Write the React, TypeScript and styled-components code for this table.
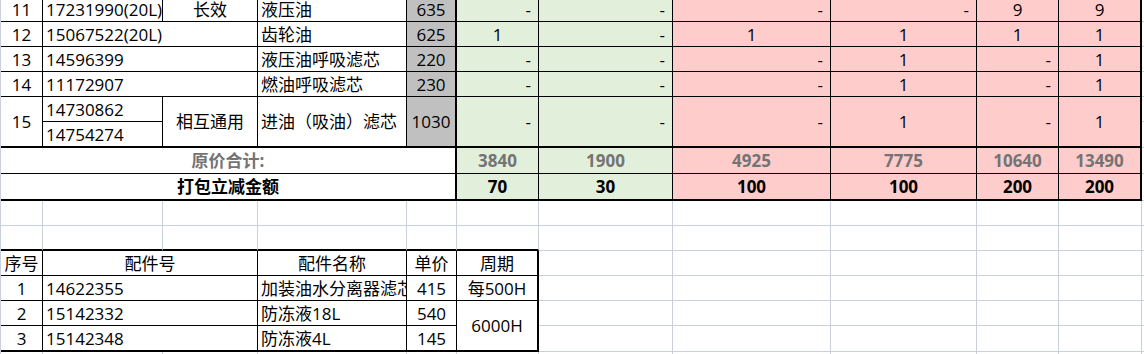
import React from "react";
import styled, { createGlobalStyle } from "styled-components";

type Edge = "grid" | "thin" | "thick";
type Align = "left" | "center" | "right";
type Fill = "none" | "gray" | "green" | "pink";

const GlobalStyle = createGlobalStyle`
  html, body {
    margin: 0;
    padding: 0;
    background: #ffffff;
    overflow: hidden;
  }
`;

const fills: Record<Fill, string> = {
  none: "#ffffff",
  gray: "#c0c0c0",
  green: "#e2efda",
  pink: "#ffcccc",
};

const edge = (e: Edge) =>
  e === "thick"
    ? "2px solid #000000"
    : e === "thin"
    ? "1px solid #000000"
    : "1px solid #c9cfdb";

const COLS = [42, 120, 95, 149, 50, 82, 134, 158, 146, 82, 83, 40];
const ROWS = [25, 25, 25, 25, 25, 26, 26, 27, 25, 25, 25, 25, 25, 26, 25];

const Sheet = styled.div`
  display: grid;
  grid-template-columns: ${COLS.map((w) => `${w}px`).join(" ")};
  grid-template-rows: ${ROWS.map((h) => `${h}px`).join(" ")};
  margin-top: -3px;
  border-left: 1px solid #c9cfdb;
  font-family: "Open Sans", "Noto Sans CJK SC", sans-serif;
  font-size: 17px;
  color: #000000;
`;

const Cell = styled.div<{
  $c: number;
  $r: number;
  $cs: number;
  $rs: number;
  $align: Align;
  $fill: Fill;
  $right: Edge;
  $bottom: Edge;
  $bold: boolean;
  $muted: boolean;
}>`
  grid-column: ${(p) => p.$c} / span ${(p) => p.$cs};
  grid-row: ${(p) => p.$r} / span ${(p) => p.$rs};
  box-sizing: border-box;
  display: flex;
  align-items: center;
  justify-content: ${(p) =>
    p.$align === "left" ? "flex-start" : p.$align === "right" ? "flex-end" : "center"};
  padding: ${(p) => (p.$align === "left" ? "0 0 0 3px" : p.$align === "right" ? "0 7px 0 0" : "0")};
  overflow: hidden;
  white-space: nowrap;
  line-height: 1;
  background: ${(p) => fills[p.$fill]};
  border-right: ${(p) => edge(p.$right)};
  border-bottom: ${(p) => edge(p.$bottom)};
  font-weight: ${(p) => (p.$bold ? 700 : 400)};
  color: ${(p) => (p.$muted ? "#747474" : "#000000")};
`;

type Spec = {
  c: number;
  r: number;
  cs?: number;
  rs?: number;
  t?: string;
  a?: Align;
  fill?: Fill;
  right?: Edge;
  bottom?: Edge;
  bold?: boolean;
  muted?: boolean;
};

const qtyFills: Fill[] = ["green", "green", "pink", "pink", "pink", "pink"];

const items = [
  { no: "11", part: "17231990(20L)", note: "长效", name: "液压油", price: "635", qty: ["-", "-", "-", "-", "9", "9"] },
  { no: "12", part: "15067522(20L)", name: "齿轮油", price: "625", qty: ["1", "-", "1", "1", "1", "1"] },
  { no: "13", part: "14596399", name: "液压油呼吸滤芯", price: "220", qty: ["-", "-", "-", "1", "-", "1"] },
  { no: "14", part: "11172907", name: "燃油呼吸滤芯", price: "230", qty: ["-", "-", "-", "1", "-", "1"] },
];

const totals = ["3840", "1900", "4925", "7775", "10640", "13490"];
const discounts = ["70", "30", "100", "100", "200", "200"];

const spares = [
  { no: "1", part: "14622355", name: "加装油水分离器滤芯", price: "415" },
  { no: "2", part: "15142332", name: "防冻液18L", price: "540" },
  { no: "3", part: "15142348", name: "防冻液4L", price: "145" },
];

const qtyCells = (r: number, values: string[], extra: Partial<Spec> = {}): Spec[] =>
  values.map((v, i) => ({
    c: 6 + i,
    r,
    t: v,
    a: v === "-" ? "right" : "center",
    fill: qtyFills[i],
    right: i === 5 ? "thick" : "thin",
    bottom: "thin",
    ...extra,
  }));

const blank = (r: number, from: number, to: number, bottom: Edge = "grid"): Spec[] => {
  const out: Spec[] = [];
  for (let c = from; c <= to; c++) out.push({ c, r, bottom });
  return out;
};

const buildCells = (): Spec[] => {
  const s: Spec[] = [];
  const thin = { right: "thin" as Edge, bottom: "thin" as Edge };

  items.forEach((it, i) => {
    const r = i + 1;
    s.push({ c: 1, r, t: it.no, ...thin });
    if (it.note) {
      s.push({ c: 2, r, t: it.part, a: "left", ...thin });
      s.push({ c: 3, r, t: it.note, ...thin });
    } else {
      s.push({ c: 2, r, cs: 2, t: it.part, a: "left", ...thin });
    }
    s.push({ c: 4, r, t: it.name, a: "left", ...thin });
    s.push({ c: 5, r, t: it.price, fill: "gray", right: "thick", bottom: "thin" });
    s.push(...qtyCells(r, it.qty));
    s.push({ c: 12, r });
  });

  // 第15项：两个通用件号
  s.push({ c: 1, r: 5, rs: 2, t: "15", right: "thin", bottom: "thick" });
  s.push({ c: 2, r: 5, t: "14730862", a: "left", ...thin });
  s.push({ c: 2, r: 6, t: "14754274", a: "left", right: "thin", bottom: "thick" });
  s.push({ c: 3, r: 5, rs: 2, t: "相互通用", right: "thin", bottom: "thick" });
  s.push({ c: 4, r: 5, rs: 2, t: "进油（吸油）滤芯", a: "left", right: "thin", bottom: "thick" });
  s.push({ c: 5, r: 5, rs: 2, t: "1030", fill: "gray", right: "thick", bottom: "thick" });
  s.push(...qtyCells(5, ["-", "-", "-", "1", "-", "1"], { rs: 2, bottom: "thick" }));
  s.push({ c: 12, r: 5 }, { c: 12, r: 6 });

  s.push({ c: 1, r: 7, cs: 5, t: "原价合计:", bold: true, muted: true, right: "thick", bottom: "thin" });
  s.push(...qtyCells(7, totals, { a: "center", bold: true, muted: true }));
  s.push({ c: 12, r: 7 });

  s.push({ c: 1, r: 8, cs: 5, t: "打包立减金额", bold: true, right: "thick", bottom: "thick" });
  s.push(...qtyCells(8, discounts, { a: "center", bold: true, bottom: "thick" }));
  s.push({ c: 12, r: 8 });

  s.push(...blank(9, 1, 12));
  s.push(...blank(10, 1, 6, "thick"), ...blank(10, 7, 12));

  s.push({ c: 1, r: 11, t: "序号", ...thin });
  s.push({ c: 2, r: 11, cs: 2, t: "配件号", ...thin });
  s.push({ c: 4, r: 11, t: "配件名称", ...thin });
  s.push({ c: 5, r: 11, t: "单价", ...thin });
  s.push({ c: 6, r: 11, t: "周期", right: "thick", bottom: "thin" });
  s.push(...blank(11, 7, 12));

  spares.forEach((sp, i) => {
    const r = 12 + i;
    const bottom: Edge = i === 2 ? "thick" : "thin";
    s.push({ c: 1, r, t: sp.no, right: "thin", bottom });
    s.push({ c: 2, r, cs: 2, t: sp.part, a: "left", right: "thin", bottom });
    s.push({ c: 4, r, t: sp.name, a: "left", right: "thin", bottom });
    s.push({ c: 5, r, t: sp.price, right: "thin", bottom });
    s.push(...blank(r, 7, 12));
  });
  s.push({ c: 6, r: 12, t: "每500H", right: "thick", bottom: "thin" });
  s.push({ c: 6, r: 13, rs: 2, t: "6000H", right: "thick", bottom: "thick" });

  s.push(...blank(15, 1, 12));
  return s;
};

const cells = buildCells();

export default function App() {
  return (
    <>
      <GlobalStyle />
      <Sheet>
        {cells.map((x, i) => (
          <Cell
            key={i}
            $c={x.c}
            $r={x.r}
            $cs={x.cs ?? 1}
            $rs={x.rs ?? 1}
            $align={x.a ?? "center"}
            $fill={x.fill ?? "none"}
            $right={x.right ?? "grid"}
            $bottom={x.bottom ?? "grid"}
            $bold={!!x.bold}
            $muted={!!x.muted}
          >
            {x.t}
          </Cell>
        ))}
      </Sheet>
    </>
  );
}
